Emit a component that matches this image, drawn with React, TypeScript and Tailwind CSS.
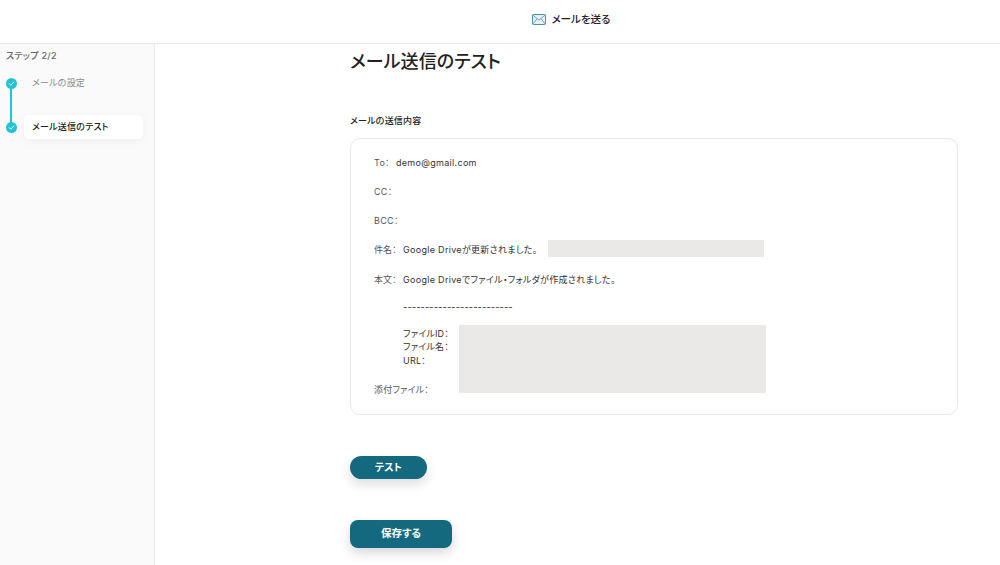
import React from 'react';

const FONT = "font-['Inter','Noto_Sans_CJK_JP',sans-serif] [font-feature-settings:'palt']";

const CheckDot = () => (
  <span className="relative flex h-[11px] w-[11px] items-center justify-center rounded-full bg-[#22c3d6]">
    <svg width="7" height="7" viewBox="0 0 8 8" fill="none">
      <path d="M1.5 4.2 3.3 6 6.6 2.4" stroke="#fff" strokeWidth="1.1" strokeLinecap="round" strokeLinejoin="round" />
    </svg>
  </span>
);

const MailIcon = () => (
  <svg width="14" height="11" viewBox="0 0 14 11" fill="none">
    <rect x="0.5" y="0.5" width="13" height="10" rx="0.8" fill="#e3f1f6" stroke="#4f93aa" />
    <path d="M0.8 1 7 6.2 13.2 1M0.8 10 5 4.8M13.2 10 9 4.8" stroke="#4f93aa" strokeWidth="0.8" />
  </svg>
);

const App = () => {
  return (
    <div className={`${FONT} flex h-[565px] w-[1000px] flex-col overflow-hidden bg-white`}>
      <header className="flex h-[44px] shrink-0 items-center justify-center border-b border-[#e9e9e9] pb-[4px] pl-[142px]">
        <MailIcon />
        <span className="ml-[6px] text-[10.5px] font-medium text-[#222]">メールを送る</span>
      </header>

      <div className="flex min-h-0 flex-1">
        <aside className="w-[155px] shrink-0 border-r border-[#e9e9e9] bg-[#fafafa] pl-[6px] pt-[5px]">
          <p className="text-[9px] leading-[13px] font-medium tracking-[0.3px] text-[#666]">ステップ 2/2</p>
          <div className="relative mt-[9px]">
            <div className="absolute left-[4px] top-[17px] h-[44px] w-[2px] bg-[#22c3d6]" />
            <div className="flex h-[24px] items-center">
              <CheckDot />
              <span className="ml-[15px] text-[9px] tracking-[0.2px] text-[#8a8a8a]">メールの設定</span>
            </div>
            <div className="mt-[20px] flex h-[24px] items-center">
              <CheckDot />
              <div className="ml-[7px] flex h-[24px] w-[119px] items-center rounded-[5px] bg-white pl-[8px] shadow-[0_2px_8px_rgba(0,0,0,0.05)]">
                <span className="text-[9px] font-medium tracking-[0.2px] text-[#222]">メール送信のテスト</span>
              </div>
            </div>
          </div>
        </aside>

        <main className="flex-1 pl-[195px] pt-[5px]">
          <h1 className="text-[18px] leading-[26px] font-medium tracking-[0.1px] text-[#222]">メール送信のテスト</h1>
          <h2 className="mt-[39px] text-[9px] leading-[14px] font-medium tracking-[0.2px] text-[#222]">メールの送信内容</h2>

          <section className="relative mt-[10px] h-[277px] w-[608px] rounded-[10px] border border-[#e8e8e8] pl-[23px] pt-[17px] text-[9px] text-[#555]">
            <div className="flex h-[14px] items-center tracking-[0.3px]">
              <span className="w-[22px]">To：</span>
              <span className="text-[#333]">demo@gmail.com</span>
            </div>
            <div className="mt-[15px] flex h-[14px] items-center tracking-[0.3px]">CC：</div>
            <div className="mt-[15px] flex h-[14px] items-center tracking-[0.3px]">BCC：</div>
            <div className="mt-[15px] flex h-[14px] items-center">
              <span className="w-[29px]">件名：</span>
              <span className="text-[#333] tracking-[0.3px]">Google Driveが更新されました。</span>
            </div>
            <div className="mt-[16px] flex h-[14px] items-center">
              <span className="w-[29px]">本文：</span>
              <span className="text-[#333] tracking-[0.3px]">Google Driveでファイル・フォルダが作成されました。</span>
            </div>
            <div className="mt-[13px] pl-[29px] text-[9.5px] leading-[14px] tracking-[0.02px] text-[#333]">-------------------------</div>
            <div className="mt-[13px] pl-[29px] leading-[13.4px] tracking-[0.2px] text-[#333]">
              <p>ファイルID：</p>
              <p>ファイル名：</p>
              <p>URL：</p>
            </div>
            <div className="mt-[16px] leading-[14px] tracking-[0.2px]">添付ファイル：</div>

            <div className="absolute left-[197px] top-[101px] h-[17px] w-[216px] bg-[#eae9e7]" />
            <div className="absolute left-[108px] top-[186px] h-[68px] w-[307px] bg-[#eae9e7]" />
          </section>

          <button className="mt-[41px] block h-[23px] w-[77px] rounded-full bg-[#14697f] text-[10px] font-semibold text-white shadow-[0_5px_12px_rgba(0,0,0,0.14)]">
            テスト
          </button>
          <button className="mt-[41px] block h-[28px] w-[102px] rounded-[8px] bg-[#14697f] text-[10.5px] font-semibold text-white shadow-[0_5px_12px_rgba(0,0,0,0.16)]">
            保存する
          </button>
        </main>
      </div>
    </div>
  );
};

export default App;
